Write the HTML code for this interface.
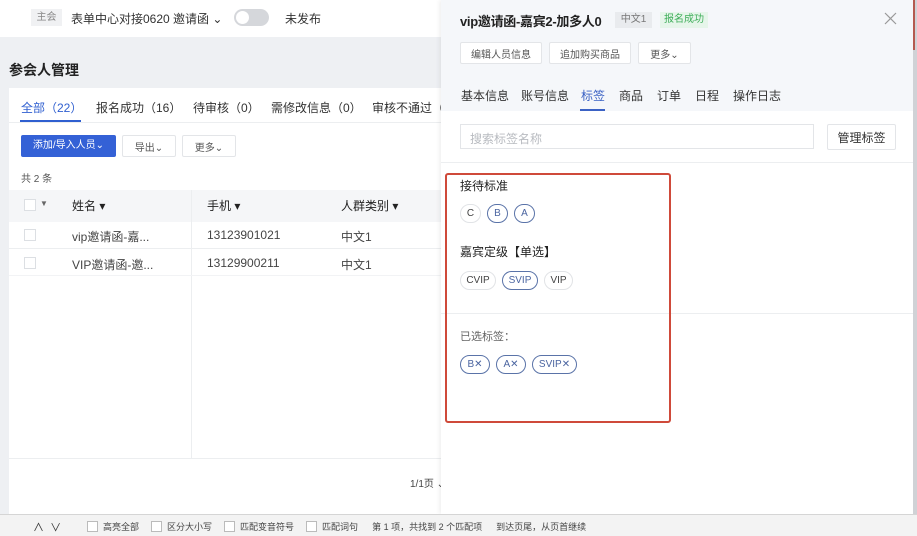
<!DOCTYPE html>
<html><head><meta charset="utf-8"><style>
*{box-sizing:border-box;margin:0;padding:0}
body{width:917px;height:536px;overflow:hidden;position:relative;background:#eef0f3;font-family:"Liberation Sans","Noto Sans CJK SC",sans-serif;color:#333;font-size:12px}
.a{position:absolute;white-space:nowrap}
.btn{position:absolute;border:1px solid #e3e5e8;background:#fff;font-size:11px;color:#555;display:flex;align-items:center;justify-content:center;border-radius:2px}
.tag{position:absolute;border:1px solid #e1e3e6;border-radius:12px;height:19px;font-size:10px;display:flex;align-items:center;justify-content:center;color:#444;background:#fff}
.tag.s{border-color:#5a73a8;color:#4a64a0}
.cb{position:absolute;width:12px;height:12px;border:1px solid #dcdfe3;background:#fff}
</style></head><body>
<div class="a" style="left:0;top:0;width:441px;height:37px;background:#fff"></div>
<div class="a" style="left:31px;top:9px;width:31px;height:17px;background:#f0f1f3;color:#888;font-size:10px;text-align:center;line-height:17px">主会</div>
<div class="a" style="left:71px;top:10px;font-size:12px;color:#333">表单中心对接0620 邀请函 ⌄</div>
<div class="a" style="left:234px;top:9px;width:35px;height:17px;border-radius:9px;background:#d5d7db"></div>
<div class="a" style="left:236px;top:11px;width:13px;height:13px;border-radius:50%;background:#fff"></div>
<div class="a" style="left:285px;top:10px;font-size:12px;color:#333">未发布</div>
<div class="a" style="left:9px;top:60px;font-size:14px;font-weight:bold;color:#222">参会人管理</div>
<div class="a" style="left:9px;top:88px;width:432px;height:426px;background:#fff"></div>
<div class="a" style="left:21px;top:99px;font-size:12px;color:#2f5fd0">全部（22）</div>
<div class="a" style="left:20px;top:120px;width:61px;height:2px;background:#2f5fd0"></div>
<div class="a" style="left:96px;top:99px;font-size:12px;color:#333">报名成功（16）</div>
<div class="a" style="left:193px;top:99px;font-size:12px;color:#333">待审核（0）</div>
<div class="a" style="left:271px;top:99px;font-size:12px;color:#333">需修改信息（0）</div>
<div class="a" style="left:372px;top:99px;font-size:12px;color:#333">审核不通过（</div>
<div class="a" style="left:9px;top:122px;width:432px;height:1px;background:#eceef0"></div>
<div class="a" style="left:21px;top:135px;width:95px;height:22px;background:#3461d6;color:#fff;font-size:10px;text-align:center;line-height:22px;border-radius:2px">添加/导入人员⌄</div>
<div class="btn" style="left:122px;top:135px;width:54px;height:22px;font-size:10px">导出⌄</div>
<div class="btn" style="left:182px;top:135px;width:54px;height:22px;font-size:10px">更多⌄</div>
<div class="a" style="left:21px;top:170px;font-size:10px;color:#555">共 2 条</div>
<div class="a" style="left:9px;top:190px;width:432px;height:32px;background:#f5f6f8"></div>
<div class="cb" style="left:24px;top:199px"></div><div class="a" style="left:40px;top:199px;font-size:8px;color:#666">▼</div>
<div class="a" style="left:72px;top:197px;font-size:12px;color:#222">姓名 ▾</div>
<div class="a" style="left:207px;top:197px;font-size:12px;color:#222">手机 ▾</div>
<div class="a" style="left:341px;top:197px;font-size:12px;color:#222">人群类别 ▾</div>
<div class="a" style="left:191px;top:190px;width:1px;height:268px;background:#eceef0"></div>
<div class="cb" style="left:24px;top:229px"></div>
<div class="a" style="left:72px;top:228px;color:#444">vip邀请函-嘉...</div>
<div class="a" style="left:207px;top:228px;color:#444">13123901021</div>
<div class="a" style="left:341px;top:228px;color:#444">中文1</div>
<div class="a" style="left:9px;top:248px;width:432px;height:1px;background:#eceef0"></div>
<div class="cb" style="left:24px;top:257px"></div>
<div class="a" style="left:72px;top:256px;color:#444">VIP邀请函-邀...</div>
<div class="a" style="left:207px;top:256px;color:#444">13129900211</div>
<div class="a" style="left:341px;top:256px;color:#444">中文1</div>
<div class="a" style="left:9px;top:275px;width:432px;height:1px;background:#f2f3f5"></div>
<div class="a" style="left:9px;top:458px;width:432px;height:1px;background:#eceef0"></div>
<div class="a" style="left:410px;top:475px;font-size:10px;color:#444">1/1页 ⌄</div>
<!-- panel -->
<div class="a" style="left:441px;top:0;width:472px;height:514px;background:#fff;box-shadow:-2px 0 4px rgba(0,0,0,.06)"></div>
<div class="a" style="left:441px;top:0;width:472px;height:111px;background:#f5f7fa"></div>
<div class="a" style="left:913px;top:0;width:4px;height:514px;background:#d0d2d6"></div>
<div class="a" style="left:913px;top:0;width:2px;height:50px;background:#b45a50"></div>
<div class="a" style="left:460px;top:11px;font-size:13px;font-weight:bold;color:#222;letter-spacing:-0.3px">vip邀请函-嘉宾2-加多人0</div>
<div class="a" style="left:615px;top:12px;width:37px;height:16px;background:#e9ebee;font-size:10px;color:#777;text-align:center;line-height:16px">中文1</div>
<div class="a" style="left:660px;top:12px;width:48px;height:16px;background:#e6f5ea;font-size:10px;color:#3fae5a;text-align:center;line-height:16px">报名成功</div>
<svg class="a" style="left:884px;top:12px" width="13" height="13" viewBox="0 0 13 13"><path d="M1 1L12 12M12 1L1 12" stroke="#999" stroke-width="1.2"/></svg>
<div class="btn" style="left:460px;top:42px;width:82px;height:22px;font-size:10px">编辑人员信息</div>
<div class="btn" style="left:549px;top:42px;width:82px;height:22px;font-size:10px">追加购买商品</div>
<div class="btn" style="left:638px;top:42px;width:53px;height:22px;font-size:10px">更多⌄</div>
<div class="a" style="left:461px;top:87px">基本信息</div>
<div class="a" style="left:521px;top:87px">账号信息</div>
<div class="a" style="left:581px;top:87px;color:#3b62c4">标签</div>
<div class="a" style="left:619px;top:87px">商品</div>
<div class="a" style="left:657px;top:87px">订单</div>
<div class="a" style="left:695px;top:87px">日程</div>
<div class="a" style="left:733px;top:87px">操作日志</div>
<div class="a" style="left:580px;top:109px;width:25px;height:2px;background:#3b62c4"></div>
<div class="a" style="left:460px;top:124px;width:354px;height:25px;border:1px solid #e3e5e8;font-size:12px;color:#b8bbc0;padding:5px 9px">搜索标签名称</div>
<div class="btn" style="left:827px;top:124px;width:69px;height:26px;font-size:12px;color:#333">管理标签</div>
<div class="a" style="left:441px;top:162px;width:472px;height:1px;background:#eceef0"></div>
<div class="a" style="left:441px;top:313px;width:472px;height:1px;background:#eceef0"></div>
<div class="a" style="left:460px;top:177px;font-size:12px;color:#222">接待标准</div>
<div class="tag" style="left:460px;top:204px;width:21px">C</div>
<div class="tag s" style="left:487px;top:204px;width:21px">B</div>
<div class="tag s" style="left:514px;top:204px;width:21px">A</div>
<div class="a" style="left:460px;top:243px;font-size:12px;color:#222">嘉宾定级【单选】</div>
<div class="tag" style="left:460px;top:271px;width:36px">CVIP</div>
<div class="tag s" style="left:502px;top:271px;width:36px">SVIP</div>
<div class="tag" style="left:544px;top:271px;width:29px">VIP</div>
<div class="a" style="left:460px;top:328px;font-size:11px;color:#666">已选标签：</div>
<div class="tag s" style="left:460px;top:355px;width:30px">B✕</div>
<div class="tag s" style="left:496px;top:355px;width:30px">A✕</div>
<div class="tag s" style="left:532px;top:355px;width:45px">SVIP✕</div>
<div class="a" style="left:445px;top:173px;width:226px;height:250px;border:2px solid #cf4a3a;border-radius:3px"></div>
<div class="a" style="left:0;top:514px;width:917px;height:22px;background:#f3f3f3;border-top:1px solid #d5d5d5"></div>
<div class="a" style="left:33px;top:519px;font-size:11px;color:#333">∧&nbsp;&nbsp;∨</div>
<div class="a" style="left:87px;top:520px;font-size:9px;color:#444;display:flex;align-items:center">
<span style="display:inline-block;width:11px;height:11px;border:1px solid #bbb;background:#fff;margin-right:5px"></span>高亮全部
<span style="display:inline-block;width:11px;height:11px;border:1px solid #bbb;background:#fff;margin:0 5px 0 12px"></span>区分大小写
<span style="display:inline-block;width:11px;height:11px;border:1px solid #bbb;background:#fff;margin:0 5px 0 12px"></span>匹配变音符号
<span style="display:inline-block;width:11px;height:11px;border:1px solid #bbb;background:#fff;margin:0 5px 0 12px"></span>匹配词句
<span style="margin-left:14px">第 1 项，共找到 2 个匹配项</span><span style="margin-left:14px">到达页尾，从页首继续</span></div>
</body></html>
